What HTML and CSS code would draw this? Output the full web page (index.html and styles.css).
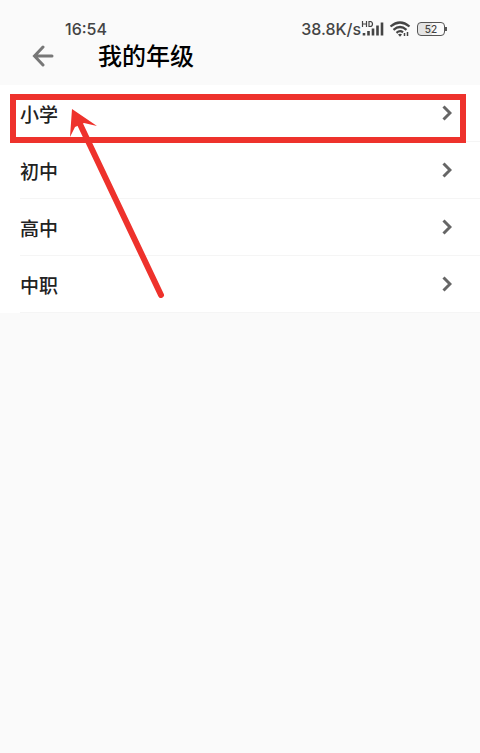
FILE: index.html
```html
<!DOCTYPE html>
<html lang="zh-CN">
<head>
  <meta charset="UTF-8">
  <meta name="viewport" content="width=device-width, initial-scale=1">
  <title>我的年级</title>
  <link rel="stylesheet" href="styles.css">
</head>
<body>
  <header>
    <div class="status-bar">
      <span class="time">16:54</span>
      <div class="status-right">
        <span>38.8K/s</span>
        <svg class="signal" width="24" height="16" viewBox="0 0 24 16">
          <path d="M1.500 0v6M5.500 0v6M1.500 3H5.500M8 .5v5h1a2.500 2.500 0 0 0 0-5z" fill="none" stroke="#444" stroke-width="1.200"/>
          <path d="M3 12v2.500M7.500 10v4.500M12 7.500v7M16.500 4.500v10M21 1.500v13" fill="none" stroke="#444" stroke-width="2.600"/>
        </svg>
        <svg class="wifi" width="22" height="16" viewBox="0 0 22 16">
          <path d="M1.500 5.500Q11-2.500 20.500 5.500M4.500 8.800Q11 3.200 17.500 8.800M7.500 11.800Q11 8.800 14 11.300" fill="none" stroke="#444" stroke-width="2.200"/>
          <path d="M9 13.500q2-1.500 4 0l-2 2.300z" fill="#444"/>
          <path d="M15.500 12v3M18.500 11v4" stroke="#444" stroke-width="1.500"/>
        </svg>
        <span class="battery">52</span>
      </div>
    </div>
    <div class="title-bar">
      <button class="back" type="button" aria-label="返回">
        <svg width="22" height="22" viewBox="0 0 22 22">
          <path d="M20 11H3M11 2L2.500 11l8.500 9" fill="none" stroke="#777" stroke-width="3" stroke-linecap="round"/>
        </svg>
      </button>
      <h1>我的年级</h1>
    </div>
  </header>

  <main>
    <ul class="grades">
      <li>
        <a href="#">小学
          <svg width="10" height="16" viewBox="0 0 10 16"><path d="M1.500 1.500L8 8l-6.500 6.500"/></svg>
        </a>
      </li>
      <li>
        <a href="#">初中
          <svg width="10" height="16" viewBox="0 0 10 16"><path d="M1.500 1.500L8 8l-6.500 6.500"/></svg>
        </a>
      </li>
      <li>
        <a href="#">高中
          <svg width="10" height="16" viewBox="0 0 10 16"><path d="M1.500 1.500L8 8l-6.500 6.500"/></svg>
        </a>
      </li>
      <li>
        <a href="#">中职
          <svg width="10" height="16" viewBox="0 0 10 16"><path d="M1.500 1.500L8 8l-6.500 6.500"/></svg>
        </a>
      </li>
    </ul>
    <!-- highlight over the first row, with its pointer -->
    <div class="highlight"></div>
    <svg class="pointer" width="96" height="190" viewBox="0 0 96 190">
      <path d="M9 13L91 186" stroke="#ee322c" stroke-width="6" stroke-linecap="round"/>
      <path d="M2 0L27 17L14 14L5 18L0 28z" fill="#ee322c"/>
    </svg>
  </main>
</body>
</html>
```
FILE: styles.css
```css
body {
  margin: 0;
  font-family: "Liberation Sans", "Noto Sans CJK SC", sans-serif;
  background: #fafafa;
  color: #222;
}
header {
  padding-top: 19px;
}
.status-bar {
  display: flex;
  justify-content: space-between;
  align-items: center;
  height: 20px;
  padding: 0 35px 0 65px;
  font-family: Inter, sans-serif;
  font-size: 16px;
  font-weight: 500;
  line-height: 20px;
  color: #444;
}
.status-right {
  display: flex;
  align-items: center;
}
.wifi {
  margin: 0 6px 0 4px;
}
.battery {
  position: relative;
  box-sizing: border-box;
  width: 28px;
  height: 14px;
  border: 1px solid #555;
  border-radius: 4px;
  background: linear-gradient(90deg, #e4e4e4 52%, #fafafa 52%);
  font-size: 10px;
  line-height: 12px;
  text-align: center;
}
.battery::after {
  content: "";
  position: absolute;
  top: 4px;
  right: -3px;
  width: 2px;
  height: 4px;
  background: #555;
}
.title-bar {
  display: flex;
  align-items: center;
  height: 34px;
  padding: 0 32px 12px;
}
.back {
  display: flex;
  padding: 0;
  border: none;
  background: none;
}
h1 {
  margin: 0 0 0 44px;
  padding-top: 2px;
  font-size: 24px;
  line-height: 34px;
  font-weight: 500;
  color: #000;
}
main {
  position: relative;
}
.grades {
  margin: 0;
  padding: 0 0 0 20px;
  list-style: none;
  background: #fff;
}
.grades li {
  border-bottom: 1px solid #f5f5f5;
}
.grades a {
  display: flex;
  justify-content: space-between;
  align-items: center;
  height: 56px;
  padding-right: 28px;
  font-size: 19px;
  font-weight: 500;
  color: #222;
  text-decoration: none;
}
.grades path {
  fill: none;
  stroke: #666;
  stroke-width: 3px;
}
.highlight {
  position: absolute;
  top: 9px;
  left: 10px;
  right: 14px;
  height: 37px;
  border: 6px solid #ee322c;
  pointer-events: none;
}
.pointer {
  position: absolute;
  top: 24px;
  left: 70px;
  pointer-events: none;
}
```
